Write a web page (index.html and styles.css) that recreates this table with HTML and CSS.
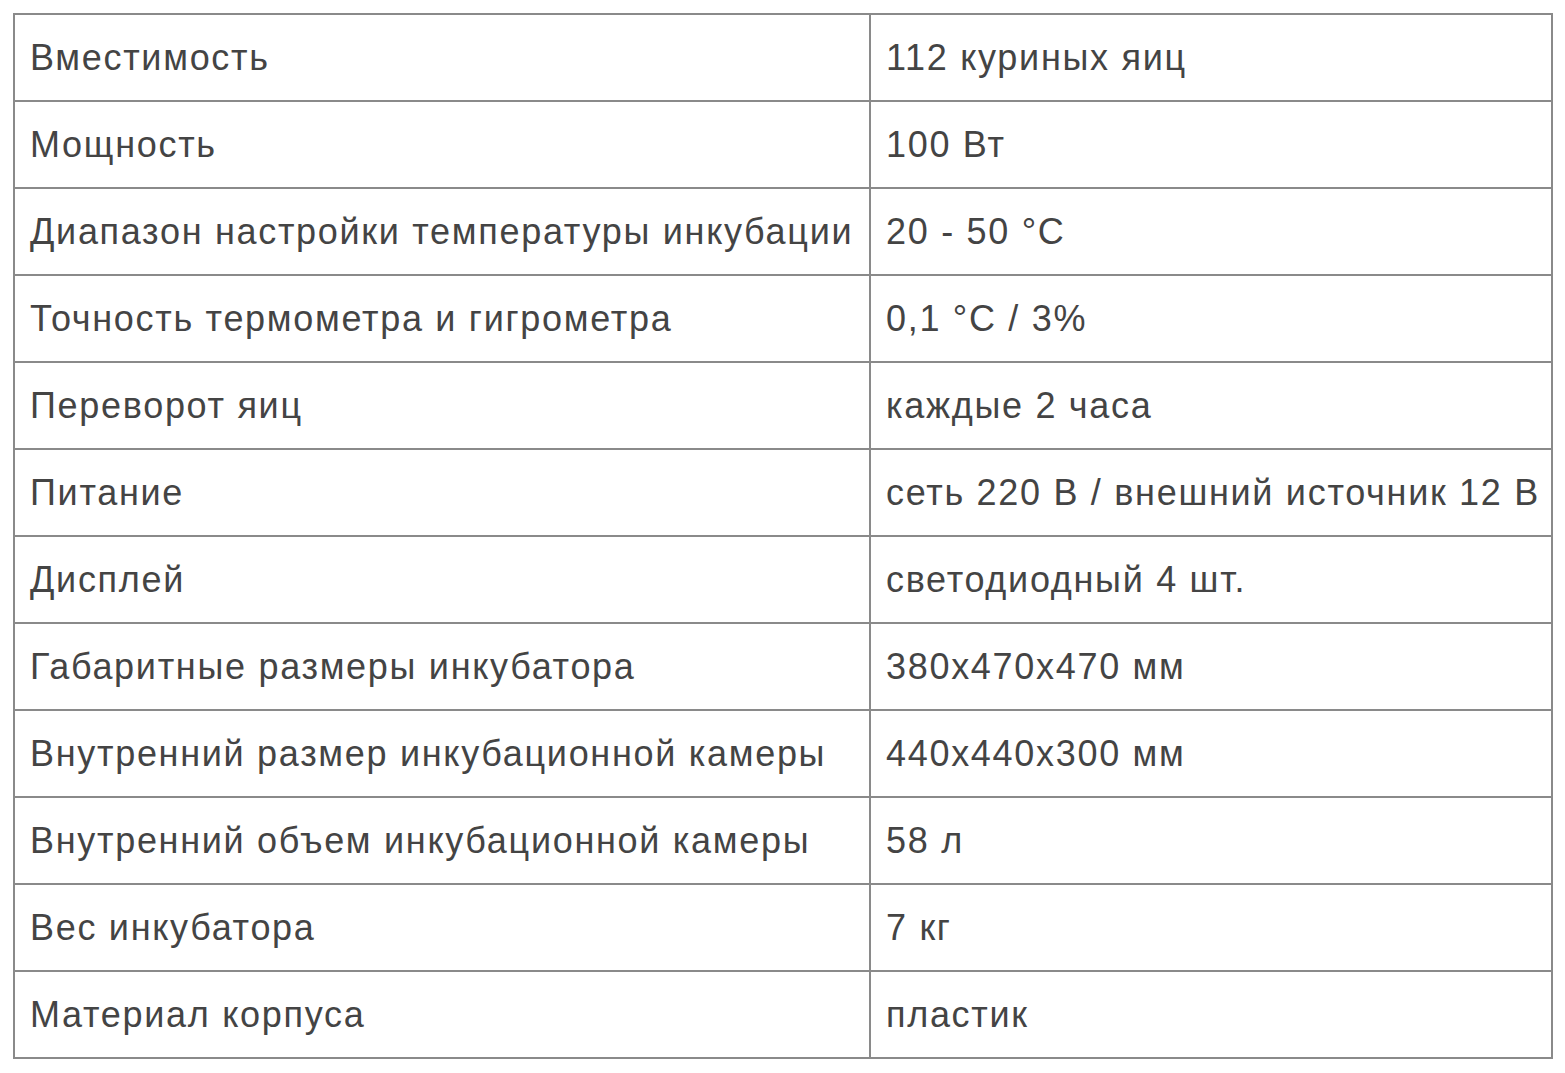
FILE: index.html
```html
<!DOCTYPE html>
<html lang="ru">
<head>
<meta charset="utf-8">
<title>Характеристики</title>
<link rel="stylesheet" href="styles.css">
</head>
<body>
<table class="specs">
  <colgroup><col class="c1"><col class="c2"></colgroup>
  <tbody>
    <tr><td>Вместимость</td><td>112 куриных яиц</td></tr>
    <tr><td>Мощность</td><td>100 Вт</td></tr>
    <tr><td>Диапазон настройки температуры инкубации</td><td>20 - 50 °C</td></tr>
    <tr><td>Точность термометра и гигрометра</td><td>0,1 °C / 3%</td></tr>
    <tr><td>Переворот яиц</td><td>каждые 2 часа</td></tr>
    <tr><td>Питание</td><td>сеть 220 В / внешний источник 12 В</td></tr>
    <tr><td>Дисплей</td><td>светодиодный 4 шт.</td></tr>
    <tr><td>Габаритные размеры инкубатора</td><td>380х470х470 мм</td></tr>
    <tr><td>Внутренний размер инкубационной камеры</td><td>440х440х300 мм</td></tr>
    <tr><td>Внутренний объем инкубационной камеры</td><td>58 л</td></tr>
    <tr><td>Вес инкубатора</td><td>7 кг</td></tr>
    <tr><td>Материал корпуса</td><td>пластик</td></tr>
  </tbody>
</table>
</body>
</html>
```
FILE: styles.css
```css
html, body {
  margin: 0;
  padding: 0;
  background: #ffffff;
}
body {
  padding: 13px 0 0 13px;
}
.specs {
  border-collapse: collapse;
  table-layout: fixed;
  width: 1540px;
  font-family: "Liberation Sans", Arial, sans-serif;
  font-size: 36px;
  letter-spacing: 1.7px;
  color: #444444;
}
.c1 { width: 856px; }
.specs td {
  border: 2px solid #8a8a8a;
  height: 87px;
  padding: 0 0 0 15px;
  vertical-align: middle;
  white-space: nowrap;
  box-sizing: border-box;
}
```
